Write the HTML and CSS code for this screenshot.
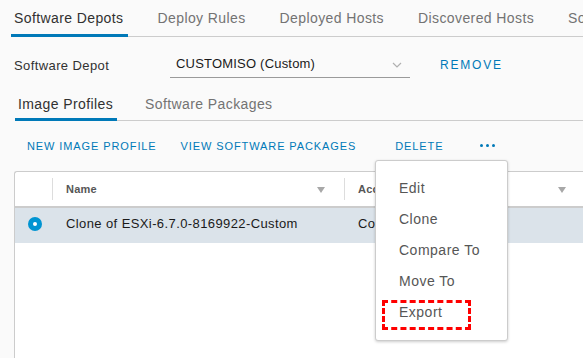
FILE: index.html
```html
<!DOCTYPE html>
<html>
<head>
<meta charset="utf-8">
<link rel="stylesheet" href="styles.css">
</head>
<body>
<div class="page">
  <nav class="tabs">
    <span class="tab active">Software Depots</span>
    <span class="tab">Deploy Rules</span>
    <span class="tab">Deployed Hosts</span>
    <span class="tab">Discovered Hosts</span>
    <span class="tab">Software Packages</span>
  </nav>

  <div class="depot">
    <span class="depot-label">Software Depot</span>
    <div class="select">
      <span>CUSTOMISO (Custom)</span>
      <svg class="chev" width="10" height="6" viewBox="0 0 10 6"><path d="M1 1 L5 5 L9 1" fill="none" stroke="#b0b0b0" stroke-width="1.2"/></svg>
    </div>
    <span class="link remove">REMOVE</span>
  </div>

  <nav class="subtabs">
    <span class="subtab active">Image Profiles</span>
    <span class="subtab">Software Packages</span>
  </nav>

  <div class="actions">
    <span class="link act">NEW IMAGE PROFILE</span>
    <span class="link act">VIEW SOFTWARE PACKAGES</span>
    <span class="link act delete">DELETE</span>
    <span class="more"><i></i><i></i><i></i></span>
  </div>

  <div class="grid">
    <div class="grid-head">
      <div class="cell sel"><span class="sep"></span></div>
      <div class="cell name">Name<span class="filter"></span><span class="sep"></span></div>
      <div class="cell acc">Acceptance Level<span class="filter"></span></div>
    </div>
    <div class="grid-row selected">
      <div class="cell sel"><span class="radio"></span></div>
      <div class="cell name">Clone of ESXi-6.7.0-8169922-Custom</div>
      <div class="cell acc">CommunitySupported</div>
    </div>
  </div>

  <div class="menu">
    <div class="item">Edit</div>
    <div class="item">Clone</div>
    <div class="item">Compare To</div>
    <div class="item">Move To</div>
    <div class="item export">Export<span class="mark"></span></div>
  </div>
</div>
</body>
</html>
```

FILE: styles.css
```css
* { box-sizing: border-box; }
html, body { margin: 0; padding: 0; }
body {
  background: #fafafa;
  font-family: "Liberation Sans", Arial, sans-serif;
  color: #313131;
  width: 583px;
  height: 358px;
  overflow: hidden;
  letter-spacing: 0.4px;
}
.page { position: relative; width: 583px; height: 358px; overflow: hidden; }

.tabs {
  display: flex;
  gap: 27px;
  margin-left: 11px;
  height: 37px;
  border-bottom: 1px solid #cccccc;
  white-space: nowrap;
}
.tab {
  font-size: 14px;
  color: #737373;
  padding: 10px 4px 0 3px;
  height: 37px;
  margin-bottom: -1px;
}
.tab.active {
  color: #313131;
  border-bottom: 3px solid #0079b8;
}

.depot {
  display: flex;
  align-items: center;
  height: 56px;
  padding-left: 14px;
  font-size: 13px;
}
.depot-label { width: 156px; color: #313131; }
.select {
  width: 240px;
  height: 23px;
  border-bottom: 1px solid #9a9a9a;
  display: flex;
  align-items: center;
  justify-content: space-between;
  padding: 0 8px 4px 6px;
  color: #1a1a1a;
  margin-top: 2px;
  letter-spacing: 0.2px;
}
.chev { margin-top: 2px; }
.link { color: #0079b8; }
.remove {
  margin-left: 30px;
  font-size: 12px;
  letter-spacing: 1.8px;
}

.subtabs {
  display: flex;
  gap: 25px;
  margin-left: 15px;
  height: 28px;
  border-bottom: 1px solid #cccccc;
}
.subtab {
  font-size: 14px;
  color: #737373;
  padding: 3px 4px 0 3px;
  height: 28px;
  margin-bottom: -1px;
}
.subtab.active { color: #313131; border-bottom: 3px solid #0079b8; }

.actions {
  display: flex;
  align-items: center;
  height: 50px;
  padding-left: 27px;
  white-space: nowrap;
}
.act {
  font-size: 11px;
  letter-spacing: 0.9px;
  margin-right: 24px;
}
.act.delete { margin-left: 15px; margin-right: 37px; }
.more { display: flex; gap: 3px; margin-top: -2px; }
.more i { width: 3px; height: 3px; border-radius: 50%; background: #0079b8; display: block; }

.grid {
  margin-left: 14px;
  width: 600px;
  height: 200px;
  background: #ffffff;
  border: 1px solid #cccccc;
  border-right: none;
  border-bottom: none;
  border-radius: 3px 0 0 0;
}
.grid-head {
  display: flex;
  height: 36px;
  border-bottom: 2px solid #cccccc;
  font-size: 11px;
  font-weight: bold;
  color: #565656;
  letter-spacing: 0.2px;
}
.grid-row { display: flex; height: 35px; font-size: 13px; color: #1a1a1a; }
.grid-row .cell { padding-bottom: 4px; }
.grid-row.selected { background: #dbe3ea; }
.cell { position: relative; display: flex; align-items: center; }
.cell.sel { width: 38px; justify-content: center; }
.cell.name { width: 292px; padding-left: 13px; }
.cell.acc { flex: 1; padding-left: 13px; }
.sep { position: absolute; top: 6px; bottom: 6px; right: 0; width: 1px; background: #dddddd; }
.filter {
  position: absolute;
  right: 20px;
  top: 15px;
  width: 0; height: 0;
  border-left: 4px solid transparent;
  border-right: 4px solid transparent;
  border-top: 6px solid #a8a8a8;
}
.cell.acc .filter { right: auto; left: 213px; }
.radio {
  width: 14px; height: 14px; border-radius: 50%;
  background: #0094d2;
  display: flex; align-items: center; justify-content: center;
  margin-left: 2px;
}
.radio::after { content: ""; width: 4px; height: 4px; border-radius: 50%; background: #fff; }

.menu {
  position: absolute;
  left: 375px;
  top: 160px;
  width: 133px;
  padding: 12px 0;
  background: #ffffff;
  border: 1px solid #cccccc;
  border-radius: 3px;
  box-shadow: 0 1px 3px rgba(0,0,0,0.2);
}
.item {
  position: relative;
  height: 31px;
  line-height: 31px;
  padding-left: 23px;
  font-size: 14px;
  color: #565656;
  letter-spacing: 0.5px;
}
.mark {
  position: absolute;
  left: 6px;
  top: 3px;
  width: 89px;
  height: 30px;
  border: 3px dashed #ff0000;
}
```
